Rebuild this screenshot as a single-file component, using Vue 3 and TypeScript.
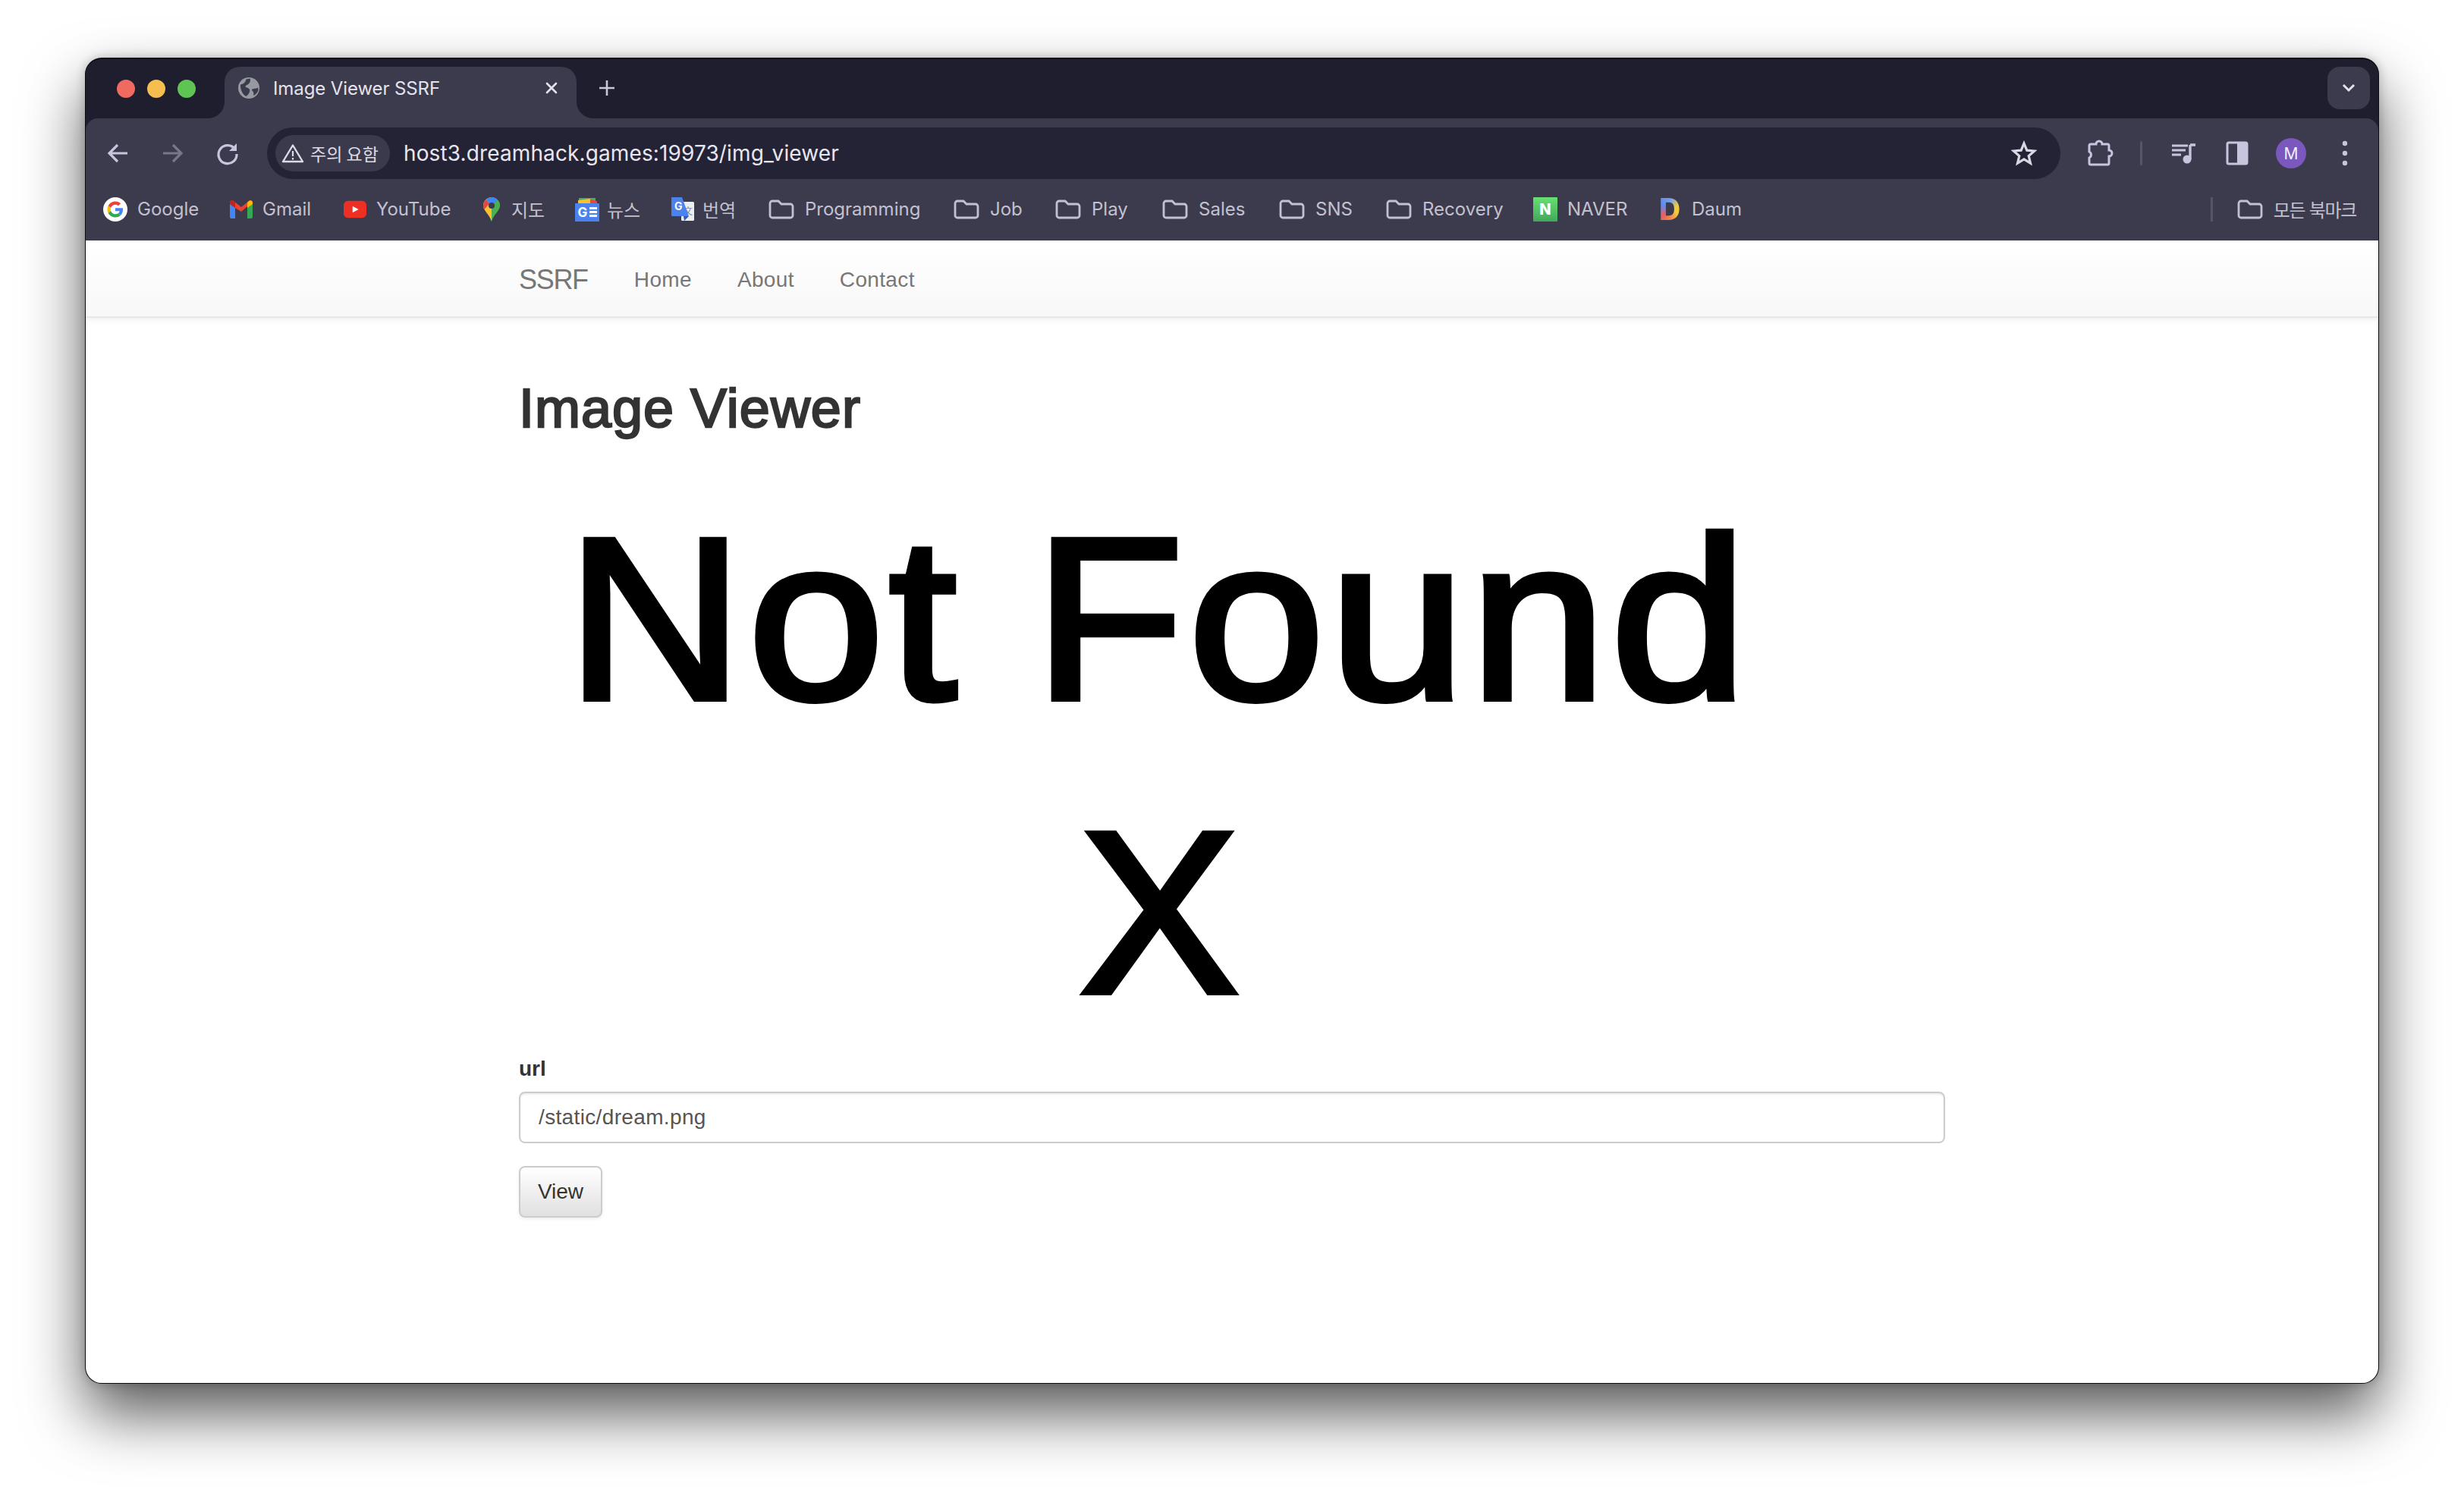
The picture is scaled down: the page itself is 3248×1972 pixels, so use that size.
<script setup lang="ts">
type Bookmark = { label: string; icon: string; width: number };

const bookmarks: Bookmark[] = [
  { label: 'Google', icon: 'google', width: 167 },
  { label: 'Gmail', icon: 'gmail', width: 150 },
  { label: 'YouTube', icon: 'youtube', width: 184 },
  { label: '지도', icon: 'maps', width: 121 },
  { label: '뉴스', icon: 'news', width: 127 },
  { label: '번역', icon: 'translate', width: 128 },
  { label: 'Programming', icon: 'folder', width: 244 },
  { label: 'Job', icon: 'folder', width: 134 },
  { label: 'Play', icon: 'folder', width: 141 },
  { label: 'Sales', icon: 'folder', width: 154 },
  { label: 'SNS', icon: 'folder', width: 141 },
  { label: 'Recovery', icon: 'folder', width: 194 },
  { label: 'NAVER', icon: 'naver', width: 166 },
  { label: 'Daum', icon: 'daum', width: 120 }
];
const navLinks = ['Home', 'About', 'Contact'];
</script>

<template>
  <div class="stage">
    <div class="window">
      <div class="tabstrip">
        <div class="lights">
          <span class="light red"></span>
          <span class="light yellow"></span>
          <span class="light green"></span>
        </div>
        <div class="tab">
          <svg class="globe" viewBox="0 0 28 28">
            <circle cx="14" cy="14" r="14" fill="#959aa1" />
            <path d="M3 9.5C7 9 9.5 6.5 10.5 2.5L15.5 1.5C17 5 14.5 9 11.5 10C9 11 9 13 11.5 13.5C14 14 16 16 15 19C14 22 12 24 10.500 25C6 23 2.500 16 3 9.500Z" fill="#3c3b4e" />
            <path d="M17.500 16.500C20 14 23 15.500 26 13.500L26.500 17C25 21 22 23.500 20 24C21 21 20 18 17.500 16.500Z" fill="#3c3b4e" />
          </svg>
          <span class="tab-title">Image Viewer SSRF</span>
          <svg class="tab-close" viewBox="0 0 18 18">
            <path d="M3 3L15 15M15 3L3 15" stroke="#e4e3ec" stroke-width="2.600" stroke-linecap="round" />
          </svg>
        </div>
        <svg class="new-tab" viewBox="0 0 24 24">
          <path d="M12 2V22M2 12H22" stroke="#c9c8d6" stroke-width="2.600" />
        </svg>
        <div class="spacer"></div>
        <div class="tab-search">
          <svg viewBox="0 0 20 14" class="chev">
            <path d="M3 3L10 10L17 3" fill="none" stroke="#e4e3ec" stroke-width="3" />
          </svg>
        </div>
      </div>

      <div class="chrome">
        <div class="toolbar">
          <svg class="tool back" viewBox="0 0 36 36">
            <path d="M30 18H7M17 7L6 18L17 29" fill="none" stroke="#c6c5dd" stroke-width="3.200" />
          </svg>
          <svg class="tool forward" viewBox="0 0 36 36">
            <path d="M6 18H29M19 7L30 18L19 29" fill="none" stroke="#77768a" stroke-width="3.200" />
          </svg>
          <svg class="tool reload" viewBox="0 0 36 36">
            <path d="M28 13A12 12 0 1 0 30 19" fill="none" stroke="#c6c5dd" stroke-width="3.200" />
            <path d="M30 5V15H20Z" fill="#c6c5dd" />
          </svg>
          <div class="omnibox">
            <div class="chip">
              <svg class="warn" viewBox="0 0 30 26">
                <path d="M15 2.500L28 24H2Z" fill="none" stroke="#dcdbe6" stroke-width="2.400" stroke-linejoin="round" />
                <path d="M15 10V17M15 19V21.500" stroke="#dcdbe6" stroke-width="2.200" />
              </svg>
              <span class="chip-text">주의 요함</span>
            </div>
            <span class="url">host3.dreamhack.games:19973/img_viewer</span>
            <svg class="star" viewBox="0 0 34 34">
              <path d="M17 4L20.800 13.200L30.700 14L23.200 20.500L25.500 30.200L17 25L8.500 30.200L10.800 20.500L3.300 14L13.200 13.200Z" fill="none" stroke="#d8d7e2" stroke-width="3.200" stroke-linejoin="miter" />
            </svg>
          </div>
          <svg class="tool puzzle" viewBox="0 0 36 36">
            <path d="M5 6H12A4 4 0 0 1 20 6H27A2 2 0 0 1 29 8V14A4 4 0 0 1 29 22V31A2 2 0 0 1 27 33H5A2 2 0 0 1 3 31V24A4.500 4.500 0 0 0 3 16V8A2 2 0 0 1 5 6Z" fill="none" stroke="#c6c5dd" stroke-width="3" />
          </svg>
          <span class="divider"></span>
          <svg class="tool queue" viewBox="0 0 36 36">
            <path d="M3 8H24M3 14H21M3 20H15" stroke="#c6c5dd" stroke-width="3" />
            <path d="M27 7H34M27 7V26" fill="none" stroke="#c6c5dd" stroke-width="3.400" />
            <circle cx="23" cy="26" r="5.500" fill="#c6c5dd" />
          </svg>
          <svg class="tool panel" viewBox="0 0 36 36">
            <rect x="5" y="4" width="26" height="28" rx="2" fill="none" stroke="#c6c5dd" stroke-width="3" />
            <rect x="18" y="4" width="13" height="28" fill="#c6c5dd" />
          </svg>
          <div class="avatar">M</div>
          <svg class="tool dots" viewBox="0 0 36 36">
            <circle cx="18" cy="5" r="3.200" fill="#c6c5dd" />
            <circle cx="18" cy="18" r="3.200" fill="#c6c5dd" />
            <circle cx="18" cy="31" r="3.200" fill="#c6c5dd" />
          </svg>
        </div>

        <div class="bookmarks">
          <div v-for="b in bookmarks" :key="b.label" class="bookmark" :style="{ width: b.width + 'px' }">
            <svg v-if="b.icon === 'folder'" class="folder" viewBox="0 0 34 26">
              <path d="M2 5A3 3 0 0 1 5 2H13L17 6H29A3 3 0 0 1 32 9V21A3 3 0 0 1 29 24H5A3 3 0 0 1 2 21Z" fill="none" stroke="#c3c1cf" stroke-width="2.800" />
            </svg>
            <svg v-else-if="b.icon === 'google'" class="ico-google" viewBox="0 0 64 64">
              <circle cx="32" cy="32" r="32" fill="#fff" />
              <g transform="translate(11 11) scale(.875)">
                <path fill="#EA4335" d="M24 9.500c3.540 0 6.710 1.220 9.210 3.600l6.850-6.850C35.900 2.380 30.470 0 24 0 14.620 0 6.510 5.380 2.560 13.220l7.980 6.190C12.430 13.720 17.740 9.500 24 9.500z" />
                <path fill="#4285F4" d="M46.980 24.550c0-1.570-.15-3.090-.38-4.550H24v9.020h12.940c-.58 2.960-2.260 5.480-4.780 7.180l7.730 6c4.510-4.180 7.090-10.360 7.090-17.650z" />
                <path fill="#FBBC05" d="M10.530 28.590c-.48-1.450-.76-2.990-.76-4.590s.27-3.140.76-4.590l-7.980-6.190C.92 16.460 0 20.120 0 24c0 3.880.92 7.540 2.560 10.780l7.970-6.190z" />
                <path fill="#34A853" d="M24 48c6.480 0 11.930-2.130 15.890-5.810l-7.730-6c-2.150 1.450-4.920 2.300-8.160 2.300-6.260 0-11.570-4.220-13.470-9.910l-7.980 6.190C6.510 42.620 14.620 48 24 48z" />
              </g>
            </svg>
            <svg v-else-if="b.icon === 'gmail'" class="ico-gmail" viewBox="0 0 30 24">
              <path d="M0 3.500V22A2 2 0 0 0 2 24H7V10Z" fill="#4285f4" />
              <path d="M30 3.500V22A2 2 0 0 1 28 24H23V10Z" fill="#34a853" />
              <path d="M0 3.500A3 3 0 0 1 5 1L15 9L25 1A3 3 0 0 1 30 3.500V5L23 10V8L15 15L7 10L0 5Z" fill="#ea4335" />
              <path d="M23 3L25 1A3 3 0 0 1 30 3.500V5L23 10Z" fill="#fbbc04" />
              <path d="M0 3.500A3 3 0 0 1 5 1L7 2.600V10L0 5Z" fill="#c5221f" />
            </svg>
            <svg v-else-if="b.icon === 'youtube'" class="ico-yt" viewBox="0 0 32 24">
              <rect x="0" y="0" width="32" height="24" rx="6" fill="#ee2f24" />
              <path d="M12.500 7.500L21 12L12.500 16.500Z" fill="#fff" />
            </svg>
            <svg v-else-if="b.icon === 'maps'" class="ico-maps" viewBox="0 0 22 32">
              <path d="M11 0A11 11 0 0 1 22 11C22 18 14 22 11 32Z" fill="#4caf50" />
              <path d="M11 0C5 0 0 5 0 11C0 18 8 22 11 32V16Z" fill="#fbc02d" />
              <path d="M4 3A11 11 0 0 0 0 11C0 13 .6 14.500 1.500 16L8 8.500Z" fill="#e8453c" />
              <path d="M4 3A11 11 0 0 1 11 0A11 11 0 0 1 19 3.500L14 8.500H8Z" fill="#4285f4" />
              <path d="M19 3.500A11 11 0 0 1 22 11L21 14L14 8.500Z" fill="#4caf50" />
              <circle cx="11" cy="11" r="4" fill="#3c3b4e" />
            </svg>
            <svg v-else-if="b.icon === 'news'" class="ico-news" viewBox="0 0 32 32">
              <path d="M5 1H27V8H5Z" fill="#4caf50" />
              <path d="M4 4L20 2L22 8H4Z" fill="#fbc02d" />
              <path d="M20 3L29 5V9H20Z" fill="#e8453c" />
              <rect x="0" y="8" width="32" height="24" rx="1" fill="#4c82ee" />
              <text x="3.500" y="26" class="news-g">G</text>
              <path d="M19 14.500H29M19 19.500H29M19 24.500H29" stroke="#fff" stroke-width="2.800" />
            </svg>
            <svg v-else-if="b.icon === 'translate'" class="ico-translate" viewBox="0 0 30 32">
              <rect x="13" y="6" width="17" height="25" rx="1.500" fill="#eceff1" />
              <text x="16" y="23" class="tr-zh">文</text>
              <path d="M1 0H14L23 25H1A1 1 0 0 1 0 24V1A1 1 0 0 1 1 0Z" fill="#4c82ee" />
              <path d="M16 25L23 25L17 31Z" fill="#3656b8" />
              <text x="4" y="17" class="tr-g">G</text>
            </svg>
            <span v-else-if="b.icon === 'naver'" class="ico-naver">N</span>
            <span v-else class="ico-daum">D</span>
            <span class="bm-label">{{ b.label }}</span>
          </div>
          <div class="spacer"></div>
          <span class="bm-divider"></span>
          <div class="bookmark all">
            <svg class="folder" viewBox="0 0 34 26">
              <path d="M2 5A3 3 0 0 1 5 2H13L17 6H29A3 3 0 0 1 32 9V21A3 3 0 0 1 29 24H5A3 3 0 0 1 2 21Z" fill="none" stroke="#c3c1cf" stroke-width="2.800" />
            </svg>
            <span class="bm-label all-label">모든 북마크</span>
          </div>
        </div>
      </div>

      <div class="page">
        <nav class="navbar">
          <div class="container nav-inner">
            <a class="brand">SSRF</a>
            <a v-for="l in navLinks" :key="l" class="nav-link">{{ l }}</a>
          </div>
        </nav>
        <main class="container content">
          <h1 class="title">Image Viewer</h1>
          <div class="picture">
            <span class="pic-line wide">Not Found</span>
            <span class="pic-line narrow">X</span>
          </div>
          <label class="field-label">url</label>
          <input class="field" type="text" value="/static/dream.png" readonly />
          <button class="view-btn" type="button">View</button>
        </main>
      </div>
    </div>
  </div>
</template>

<style>
html, body { margin: 0; background: #fff; }
</style>

<style scoped>
.stage {
  width: 3248px;
  height: 1972px;
  box-sizing: border-box;
  padding: 76px 112px 0;
  background: #fff;
  overflow: hidden;
}
.window {
  width: 3024px;
  height: 1748px;
  box-sizing: border-box;
  border: solid #0b0b10;
  border-width: 2px 1px 1px;
  border-radius: 22px;
  overflow: hidden;
  display: flex;
  flex-direction: column;
  background: #1f1e2e;
  box-shadow: 0 40px 80px rgba(0, 0, 0, .65), 0 0 14px rgba(0, 0, 0, .22);
  font-family: Inter, "Noto Sans CJK KR", sans-serif;
}
.spacer { flex: 1; }

.tabstrip {
  height: 78px;
  display: flex;
  align-items: flex-end;
  background: #1f1e2e;
  flex: none;
}
.lights {
  display: flex;
  gap: 16px;
  padding: 0 38px 27px 41px;
}
.light { width: 24px; height: 24px; border-radius: 50%; }
.red { background: #ef6a5f; }
.yellow { background: #f5be4f; }
.green { background: #5fc454; }

.tab {
  position: relative;
  width: 464px;
  height: 68px;
  box-sizing: border-box;
  padding: 0 24px 12px 18px;
  display: flex;
  align-items: center;
  background: #3c3b4e;
  border-radius: 20px 20px 0 0;
}
.tab::before, .tab::after {
  content: "";
  position: absolute;
  bottom: 0;
  width: 22px;
  height: 22px;
  background: radial-gradient(circle at var(--cx) 0, #1f1e2e 21.5px, #3c3b4e 22.500px);
}
.tab::before { left: -22px; --cx: 0; }
.tab::after { right: -22px; --cx: 22px; }
.globe { width: 28px; height: 28px; flex: none; }
.tab-title {
  margin-left: 18px;
  flex: 1;
  font-size: 24px;
  color: #e4e3ec;
  letter-spacing: -.1px;
}
.tab-close { width: 18px; height: 18px; flex: none; }
.new-tab { width: 24px; height: 24px; margin: 0 0 28px 28px; flex: none; }
.tab-search {
  width: 56px;
  height: 56px;
  margin: 0 11px 12px 0;
  border-radius: 16px;
  background: #3c3b4e;
  display: flex;
  align-items: center;
  justify-content: center;
}
.chev { width: 20px; height: 14px; }

.chrome {
  background: #3c3b4e;
  border-radius: 16px 16px 0 0;
  flex: none;
  height: 161px;
  position: relative;
}
.toolbar {
  display: flex;
  align-items: center;
  padding: 12px 0 0 25px;
  height: 68px;
}
.tool { width: 36px; height: 36px; flex: none; }
.forward { margin-left: 35px; }
.reload { margin-left: 37px; }
.omnibox {
  margin-left: 34px;
  width: 2364px;
  height: 68px;
  flex: none;
  box-sizing: border-box;
  border-radius: 34px;
  background: #242336;
  display: flex;
  align-items: center;
  padding: 0 31px 0 11px;
}
.chip {
  width: 151px;
  height: 48px;
  flex: none;
  box-sizing: border-box;
  padding-left: 8px;
  border-radius: 24px;
  background: #3b3a4c;
  display: flex;
  align-items: center;
  gap: 8px;
}
.warn { width: 30px; height: 26px; flex: none; }
.chip-text {
  font-family: "Noto Sans CJK KR", sans-serif;
  font-size: 23px;
  color: #dcdbe6;
  white-space: nowrap;
}
.url {
  margin-left: 18px;
  flex: 1;
  font-size: 28px;
  color: #e8e6f0;
  letter-spacing: .12px;
}
.star { width: 34px; height: 34px; flex: none; }
.puzzle { margin-left: 35px; }
.divider {
  width: 3px;
  height: 32px;
  background: #55546a;
  border-radius: 2px;
  margin-left: 34px;
  flex: none;
}
.queue { margin-left: 36px; }
.panel { margin-left: 35px; }
.avatar {
  margin-left: 33px;
  width: 40px;
  height: 40px;
  border-radius: 50%;
  background: #7a58bd;
  color: #f1eefa;
  font-size: 21px;
  display: flex;
  align-items: center;
  justify-content: center;
  flex: none;
}
.dots { margin-left: 33px; }

.bookmarks {
  display: flex;
  align-items: center;
  height: 79px;
  padding: 0 29px 0 23px;
}
.bookmark {
  display: flex;
  align-items: center;
  flex: none;
  white-space: nowrap;
}
.bm-label {
  margin-left: 13px;
  font-size: 24px;
  color: #c3c1cf;
}
.all-label { letter-spacing: -1.300px; }
.folder { width: 34px; height: 26px; flex: none; margin-right: 1px; }
.ico-google { width: 32px; height: 32px; flex: none; }
.ico-gmail { width: 30px; height: 24px; flex: none; }
.ico-yt { width: 30px; height: 24px; flex: none; }
.ico-maps { width: 22px; height: 32px; flex: none; margin-right: 2px; }
.ico-news { width: 32px; height: 32px; flex: none; margin-right: -3px; }
.ico-translate { width: 30px; height: 32px; flex: none; margin-right: -2px; }
.news-g { font: 700 17px Inter, sans-serif; fill: #fff; }
.tr-g { font: 700 14px Inter, sans-serif; fill: #fff; }
.tr-zh { font: 400 12px "Noto Sans CJK SC", sans-serif; fill: #7c8aa0; }
.ico-naver {
  width: 32px;
  height: 32px;
  flex: none;
  border-radius: 1px;
  background: linear-gradient(#66e072, #43a85a);
  color: #fff;
  font-size: 20px;
  font-weight: 800;
  display: flex;
  align-items: center;
  justify-content: center;
}
.ico-daum {
  width: 30px;
  flex: none;
  font-size: 39px;
  line-height: 32px;
  font-weight: 800;
  background: conic-gradient(#7aa0e8 0deg, #f2c93f 60deg, #f2c93f 120deg, #f08a4b 180deg, #e8605c 230deg, #5b8cf5 300deg, #7aa0e8 360deg);
  -webkit-background-clip: text;
  background-clip: text;
  color: transparent;
}
.bm-divider {
  width: 3px;
  height: 32px;
  background: #55546a;
  margin-right: 32px;
  flex: none;
}

.page {
  flex: 1;
  background: #fff;
  font-family: "Liberation Sans", Arial, sans-serif;
}
.container {
  width: 1880px;
  margin: 0 auto;
}
.navbar {
  height: 102px;
  box-sizing: border-box;
  border-bottom: 2px solid #e7e7e7;
  background: linear-gradient(#fff, #f8f8f8);
  box-shadow: 0 2px 10px rgba(0, 0, 0, .075);
}
.nav-inner {
  display: flex;
  align-items: center;
  height: 100px;
  box-sizing: border-box;
  padding-top: 3px;
  gap: 60px;
}
.brand { font-size: 36px; color: #777; letter-spacing: -1.300px; margin-right: 1px; }
.nav-link { font-size: 28px; color: #777; letter-spacing: .35px; }

.content {
  display: flex;
  flex-direction: column;
  align-items: flex-start;
}
.title {
  margin: 80px 0 20px;
  font-size: 72px;
  line-height: 79px;
  font-weight: 400;
  color: #333;
  -webkit-text-stroke: 2.400px #333;
  letter-spacing: 1px;
}
.picture {
  width: 1688px;
  height: 791px;
  box-sizing: border-box;
  padding-top: 24px;
  font-size: 304px;
  line-height: 387px;
  color: #000;
  text-align: center;
}
.pic-line {
  display: block;
  white-space: nowrap;
  -webkit-text-stroke: 8px #000;
}
.wide { transform: scaleX(1.06); letter-spacing: 6px; }
.narrow { transform: scaleX(1.03); }
.field-label {
  font-size: 28px;
  line-height: 40px;
  font-weight: 700;
  color: #333;
  margin-bottom: 10px;
}
.field {
  width: 100%;
  height: 68px;
  box-sizing: border-box;
  padding: 12px 24px;
  border: 2px solid #ccc;
  border-radius: 8px;
  background: #fff;
  box-shadow: inset 0 2px 2px rgba(0, 0, 0, .075);
  font-family: inherit;
  font-size: 28px;
  letter-spacing: .35px;
  color: #555;
  outline: none;
}
.view-btn {
  margin-top: 30px;
  width: 110px;
  height: 68px;
  box-sizing: border-box;
  padding: 0;
  border: 2px solid #ccc;
  border-radius: 8px;
  background: linear-gradient(#fff, #e0e0e0);
  box-shadow: 0 2px 4px rgba(0, 0, 0, .075);
  font-family: inherit;
  font-size: 28px;
  color: #333;
}
</style>
